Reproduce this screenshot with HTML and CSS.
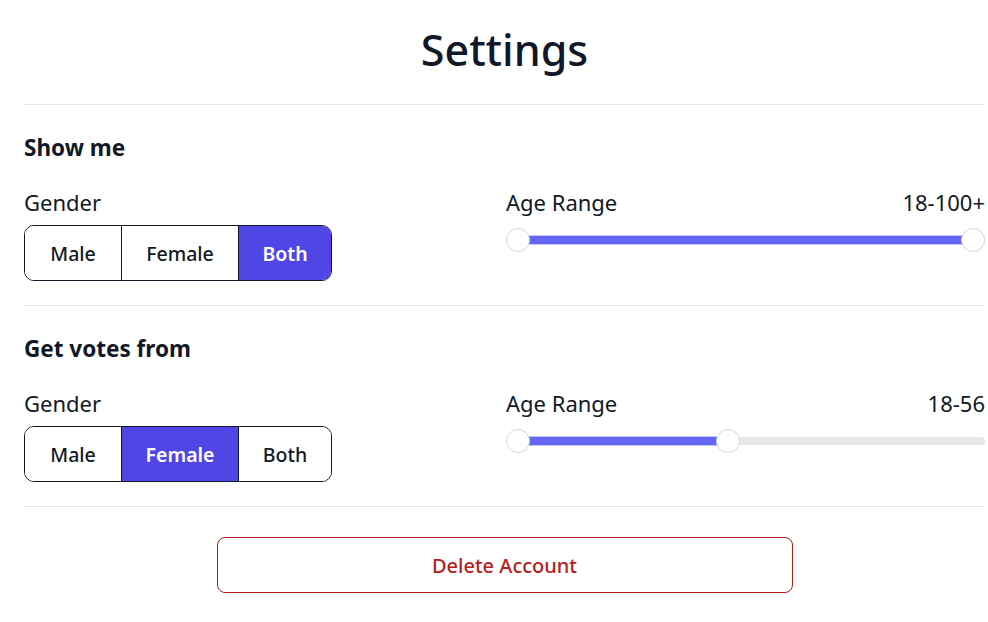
FILE: index.html
```html
<!DOCTYPE html>
<html>
<head>
<meta charset="utf-8">
<link rel="stylesheet" href="styles.css">
</head>
<body>
<div class="page">
  <header class="title-bar"><h1 class="title">Settings</h1></header>

  <section class="section">
    <h2 class="section-title">Show me</h2>
    <div class="row">
      <div class="col">
        <div class="label">Gender</div>
        <div class="seg">
          <button class="seg-btn w-male">Male</button>
          <button class="seg-btn w-female">Female</button>
          <button class="seg-btn w-both active">Both</button>
        </div>
      </div>
      <div class="col">
        <div class="label-row"><span class="label">Age Range</span><span class="label">18-100+</span></div>
        <div class="slider">
          <div class="track"></div>
          <div class="fill" style="left:11px; width:456px"></div>
          <div class="thumb" style="left:0px"></div>
          <div class="thumb" style="left:455px"></div>
        </div>
      </div>
    </div>
  </section>

  <section class="section">
    <h2 class="section-title">Get votes from</h2>
    <div class="row">
      <div class="col">
        <div class="label">Gender</div>
        <div class="seg">
          <button class="seg-btn w-male">Male</button>
          <button class="seg-btn w-female active">Female</button>
          <button class="seg-btn w-both">Both</button>
        </div>
      </div>
      <div class="col">
        <div class="label-row"><span class="label">Age Range</span><span class="label">18-56</span></div>
        <div class="slider">
          <div class="track"></div>
          <div class="fill" style="left:11px; width:211px"></div>
          <div class="thumb" style="left:0px"></div>
          <div class="thumb" style="left:210px"></div>
        </div>
      </div>
    </div>
  </section>

  <div class="footer">
    <button class="delete">Delete Account</button>
  </div>
</div>
</body>
</html>
```
FILE: styles.css
```css
* { box-sizing: border-box; }
html, body { margin: 0; padding: 0; background: #fff; }
body {
  font-family: "Noto Sans", "Open Sans", "Liberation Sans", sans-serif;
  color: #111827;
}
.page { padding: 0 3px 0 24px; }
.title-bar {
  height: 105px;
  display: flex;
  align-items: center;
  justify-content: center;
  border-bottom: 1px solid #e5e7eb;
}
.title {
  margin: 0 0 6px 0;
  font-size: 43px;
  font-weight: 500;
  line-height: 1;
  color: #111827;
}
.section {
  border-bottom: 1px solid #e5e7eb;
  padding: 29px 0 24px 0;
}
.section-title {
  margin: 0 0 26px 0;
  font-size: 22.5px;
  font-weight: 700;
  line-height: 28px;
}
.row {
  display: grid;
  grid-template-columns: 482px 1fr;
}
.col { display: flex; flex-direction: column; }
.label {
  font-size: 22px;
  line-height: 28px;
  font-weight: 400;
}
.label-row { display: flex; justify-content: space-between; }
.seg {
  margin-top: 9px;
  display: flex;
  width: 308px;
  height: 56px;
  border: 1px solid #111827;
  border-radius: 10px;
  overflow: hidden;
}
.seg-btn {
  border: 0;
  background: #fff;
  font-family: inherit;
  font-size: 19.5px;
  font-weight: 500;
  color: #111827;
  padding: 0;
  height: 100%;
}
.seg-btn + .seg-btn { border-left: 1px solid #111827; }
.w-male { width: 96px; }
.w-female { width: 117px; }
.w-both { flex: 1; }
.seg-btn.active { background: #4f46e5; color: #fff; font-weight: 600; }
.slider {
  position: relative;
  height: 24px;
  margin-top: 12px;
}
.track {
  position: absolute;
  left: 11px;
  right: 0;
  top: 8px;
  height: 8px;
  border-radius: 4px;
  background: #e5e7eb;
}
.fill {
  position: absolute;
  top: 8px;
  height: 8px;
  background: #6366f1;
  box-shadow: 0 0 0 1px #c7c8fa;
}
.thumb {
  position: absolute;
  top: 0;
  width: 24px;
  height: 24px;
  border-radius: 50%;
  background: #fff;
  border: 1px solid #d1d5db;
}
.footer {
  display: flex;
  justify-content: center;
  padding-top: 30px;
}
.delete {
  width: 576px;
  height: 56px;
  border: 1px solid #b91c1c;
  border-radius: 8px;
  background: #fff;
  color: #b91c1c;
  font-family: inherit;
  font-size: 20px;
  font-weight: 500;
}
```
